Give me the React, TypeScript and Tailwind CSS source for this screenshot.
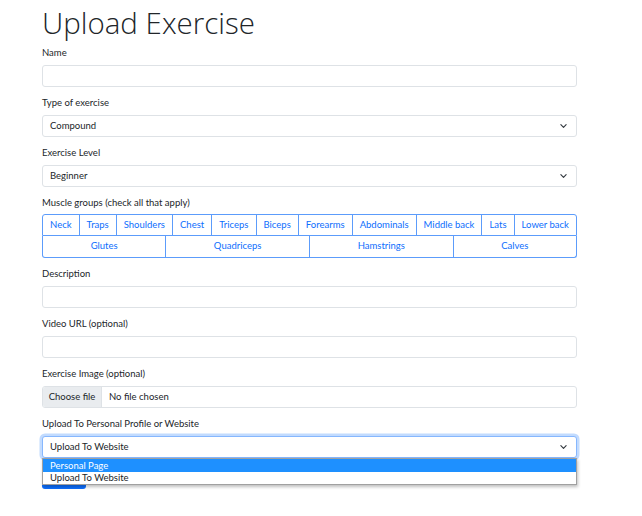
import React from "react";

const font = { fontFamily: 'Lato, "Noto Sans", sans-serif' };

function Chevron() {
  return (
    <svg width="7" height="5" viewBox="0 0 16 10" className="absolute right-[9px] top-1/2 -translate-y-1/2">
      <path d="M2 2l6 6 6-6" fill="none" stroke="#343a40" strokeWidth="2.6" strokeLinecap="round" strokeLinejoin="round" />
    </svg>
  );
}

function Label({ children }: { children: React.ReactNode }) {
  return <div className="h-[14px] leading-[14px] text-[9.5px] text-[#212529] mb-[5px]">{children}</div>;
}

function Input() {
  return <div className="h-[22px] border border-[#dee2e6] rounded-[3px] bg-white mb-[9px]" />;
}

function Select({ value, focus }: { value: string; focus?: boolean }) {
  return (
    <div
      className={
        "relative h-[22px] rounded-[3px] bg-white flex items-center pl-[7px] text-[9.5px] text-[#212529] " +
        (focus
          ? "border border-[#86b7fe] shadow-[0_0_0_2.5px_rgba(13,110,253,0.25)]"
          : "border border-[#dee2e6] mb-[9px]")
      }
    >
      {value}
      <Chevron />
    </div>
  );
}

const row1 = ["Neck", "Traps", "Shoulders", "Chest", "Triceps", "Biceps", "Forearms", "Abdominals", "Middle back", "Lats", "Lower back"];
const row2 = ["Glutes", "Quadriceps", "Hamstrings", "Calves"];

export default function App() {
  return (
    <div className="bg-white min-h-[516px] w-[642px]" style={font}>
      <div className="ml-[42px] w-[535px]">
        <h1 className="text-[29.5px] font-light leading-[46px] text-[#212529]" style={{ fontFamily: '"Open Sans", "Noto Sans", sans-serif' }}>
          Upload Exercise
        </h1>
        <Label>Name</Label>
        <Input />
        <Label>Type of exercise</Label>
        <Select value="Compound" />
        <Label>Exercise Level</Label>
        <Select value="Beginner" />
        <div className="h-[14px] leading-[14px] text-[9.5px] text-[#212529] mb-[4px]">Muscle groups (check all that apply)</div>
        <div className="mb-[9px]">
          <div className="flex border border-[#5c9cfb] rounded-t-[3px]">
            {row1.map((m, i) => (
              <div
                key={m}
                className={"flex-auto whitespace-nowrap h-[20px] flex items-center justify-center px-[6px] text-[9.5px] text-[#0d6efd] " + (i > 0 ? "border-l border-[#5c9cfb]" : "")}
              >
                {m}
              </div>
            ))}
          </div>
          <div className="flex border border-t-0 border-[#5c9cfb] rounded-b-[3px]">
            {row2.map((m, i) => (
              <div
                key={m}
                className={"flex-auto whitespace-nowrap h-[21px] flex items-center justify-center px-[6px] text-[9.5px] text-[#0d6efd] " + (i > 0 ? "border-l border-[#5c9cfb]" : "")}
              >
                {m}
              </div>
            ))}
          </div>
        </div>
        <Label>Description</Label>
        <Input />
        <Label>Video URL (optional)</Label>
        <Input />
        <Label>Exercise Image (optional)</Label>
        <div className="h-[22px] border border-[#dee2e6] rounded-[3px] bg-white mb-[9px] flex text-[9.5px] text-[#212529] overflow-hidden">
          <div className="w-[59px] bg-[#e9ecef] border-r border-[#dee2e6] flex items-center justify-center">Choose file</div>
          <div className="flex items-center pl-[7px]">No file chosen</div>
        </div>
        <Label>Upload To Personal Profile or Website</Label>
        <div className="relative">
          <Select value="Upload To Website" focus />
          <div className="mt-[9px] w-[44px] h-[22px] rounded-[3px] bg-[#0d6efd]" />
          <div className="absolute left-0 right-0 top-[22px] bg-white border border-[#a0a0a0] shadow-[1px_2px_3px_rgba(0,0,0,0.25)] text-[9.5px]">
            <div className="h-[13px] leading-[13px] bg-[#1e90ff] text-white pl-[7px]">Personal Page</div>
            <div className="h-[12px] leading-[12px] text-[#212529] pl-[7px]">Upload To Website</div>
          </div>
        </div>
      </div>
    </div>
  );
}
